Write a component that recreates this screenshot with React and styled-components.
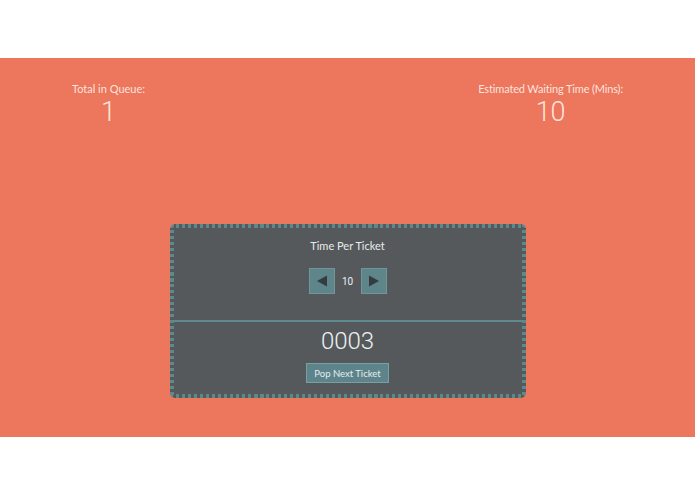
import React, { useState } from "react";
import styled, { createGlobalStyle } from "styled-components";

const Global = createGlobalStyle`
  html, body { margin: 0; padding: 0; background: #ffffff; }
  body { font-family: "Lato", "Open Sans", sans-serif; }
`;

const Page = styled.div`
  padding-top: 58px;
  width: 695px;
`;

const Stage = styled.section`
  background: #ec775c;
  height: 379px;
  box-sizing: border-box;
  padding-top: 24px;
  display: flex;
  flex-direction: column;
  align-items: center;
`;

const StatsRow = styled.div`
  align-self: stretch;
  display: flex;
  justify-content: space-between;
  padding: 0 72px 0 72px;
`;

const Stat = styled.div`
  display: flex;
  flex-direction: column;
  align-items: center;
  color: rgba(255, 240, 235, 0.92);
`;

const StatLabel = styled.div`
  font-size: 11px;
  line-height: 14px;
  font-weight: 400;
  letter-spacing: ${(p) => (p.$tight ? "-0.15px" : "0")};
`;

const StatValue = styled.div`
  font-family: "Roboto", "Lato", sans-serif;
  font-weight: 300;
  font-size: 27px;
  line-height: 30px;
  margin-top: 1px;
`;

const edge = "#5c898c";
const body = "#55595b";

const Panel = styled.div`
  margin-top: 97px;
  width: 356px;
  height: 174px;
  box-sizing: border-box;
  padding: 4px;
  border-radius: 5px;
  background:
    repeating-linear-gradient(90deg, ${edge} 0 3.5px, transparent 3.5px 6px) top left / 100% 4px no-repeat,
    repeating-linear-gradient(90deg, ${edge} 0 3.5px, transparent 3.5px 6px) bottom left / 100% 4px no-repeat,
    repeating-linear-gradient(180deg, ${edge} 0 3.5px, transparent 3.5px 6px) top left / 4px 100% no-repeat,
    repeating-linear-gradient(180deg, ${edge} 0 3.5px, transparent 3.5px 6px) top right / 4px 100% no-repeat,
    ${body};
  display: flex;
  flex-direction: column;
  align-items: center;
  color: #e9ecec;
`;

const Title = styled.div`
  margin-top: 11px;
  font-size: 11px;
  line-height: 14px;
`;

const Stepper = styled.div`
  margin-top: 15px;
  display: flex;
  align-items: center;
`;

const StepButton = styled.button`
  width: 26px;
  height: 26px;
  padding: 0;
  box-sizing: border-box;
  background: #5d858a;
  border: 1px solid #729599;
  display: flex;
  align-items: center;
  justify-content: center;
  cursor: pointer;
`;

const StepValue = styled.span`
  width: 26px;
  text-align: center;
  font-size: 10px;
  font-family: "Roboto", sans-serif;
  color: #eef0f0;
`;

const Divider = styled.div`
  align-self: stretch;
  height: 2px;
  background: #5e8a8e;
  margin-top: 26px;
`;

const Ticket = styled.div`
  margin-top: 5px;
  font-family: "Roboto", sans-serif;
  font-weight: 300;
  font-size: 24px;
  line-height: 29px;
  color: #eef0f0;
`;

const PopButton = styled.button`
  margin-top: 7px;
  width: 83px;
  height: 20px;
  box-sizing: border-box;
  padding: 0;
  background: #5d848a;
  border: 1px solid #7a9ea2;
  color: #e6ecec;
  font-family: "Lato", sans-serif;
  font-size: 9.5px;
  cursor: pointer;
`;

const Tri = ({ dir }) => (
  <svg width="12" height="12" viewBox="0 0 12 12">
    {dir === "left" ? (
      <polygon points="11,0.5 11,11.5 1,6" fill="#353c3f" />
    ) : (
      <polygon points="1,0.5 1,11.5 11,6" fill="#353c3f" />
    )}
  </svg>
);

export default function App() {
  const [time, setTime] = useState(10);
  return (
    <Page>
      <Global />
      <Stage>
        <StatsRow>
          <Stat>
            <StatLabel>Total in Queue:</StatLabel>
            <StatValue>1</StatValue>
          </Stat>
          <Stat>
            <StatLabel $tight>Estimated Waiting Time (Mins):</StatLabel>
            <StatValue>10</StatValue>
          </Stat>
        </StatsRow>
        <Panel>
          <Title>Time Per Ticket</Title>
          <Stepper>
            <StepButton onClick={() => setTime((t) => Math.max(0, t - 1))}>
              <Tri dir="left" />
            </StepButton>
            <StepValue>{time}</StepValue>
            <StepButton onClick={() => setTime((t) => t + 1)}>
              <Tri dir="right" />
            </StepButton>
          </Stepper>
          <Divider />
          <Ticket>0003</Ticket>
          <PopButton>Pop Next Ticket</PopButton>
        </Panel>
      </Stage>
    </Page>
  );
}
